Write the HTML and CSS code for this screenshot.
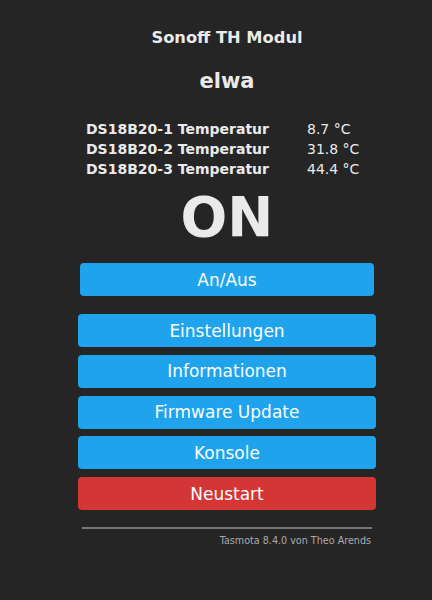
FILE: index.html
```html
<!DOCTYPE html>
<html>
<head>
<meta charset="utf-8">
<link rel="stylesheet" href="styles.css">
</head>
<body>
<div class="wrap">
  <h3 class="module">Sonoff TH Modul</h3>
  <h2 class="name">elwa</h2>
  <table class="sensors">
    <tr><th>DS18B20-1 Temperatur</th><td>8.7&nbsp;°C</td></tr>
    <tr><th>DS18B20-2 Temperatur</th><td>31.8&nbsp;°C</td></tr>
    <tr><th>DS18B20-3 Temperatur</th><td>44.4&nbsp;°C</td></tr>
  </table>
  <div class="state">ON</div>
  <div class="toggle-row"><button class="btn">An/Aus</button></div>
  <div class="menu">
    <button class="btn">Einstellungen</button>
    <button class="btn">Informationen</button>
    <button class="btn">Firmware Update</button>
    <button class="btn">Konsole</button>
    <button class="btn red">Neustart</button>
  </div>
  <div class="rule"></div>
  <div class="footer">Tasmota 8.4.0 von Theo Arends</div>
</div>
</body>
</html>
```

FILE: styles.css
```css
html, body {
  margin: 0;
  padding: 0;
  background: #252525;
  color: #eaeaea;
  font-family: "DejaVu Sans", Verdana, sans-serif;
}
.wrap {
  width: 298px;
  margin-left: 78px;
  padding-top: 28px;
}
.module {
  margin: 0;
  text-align: center;
  font-size: 16.3px;
  line-height: 20px;
  font-weight: bold;
}
.name {
  margin: 20px 0 0 0;
  text-align: center;
  font-size: 21px;
  line-height: 26px;
  font-weight: bold;
}
.sensors {
  margin: 25px 0 0 8px;
  border-collapse: collapse;
}
.sensors th {
  text-align: left;
  font-weight: bold;
  font-size: 14px;
  line-height: 20px;
  padding: 0;
  width: 221px;
}
.sensors td {
  font-size: 14px;
  line-height: 20px;
  padding: 0;
}
.state {
  text-align: center;
  font-weight: bold;
  font-size: 55px;
  line-height: 60px;
  margin-top: 8px;
}
.toggle-row {
  padding: 0 2px;
  margin-top: 16px;
}
.btn {
  display: block;
  width: 100%;
  height: 33px;
  border: 0;
  border-radius: 4px;
  background: #1fa3ec;
  color: #faffff;
  font-family: "DejaVu Sans", Verdana, sans-serif;
  font-size: 17px;
  padding: 0;
}
.menu {
  margin-top: 18px;
  display: flex;
  flex-direction: column;
  gap: 7.8px;
}
.red {
  background: #d43535;
}
.rule {
  margin: 17px 4px 0 4px;
  height: 2px;
  background: #777;
}
.footer {
  text-align: right;
  font-size: 9.6px;
  color: #aaa;
  margin: 6px 5px 0 0;
}
```
